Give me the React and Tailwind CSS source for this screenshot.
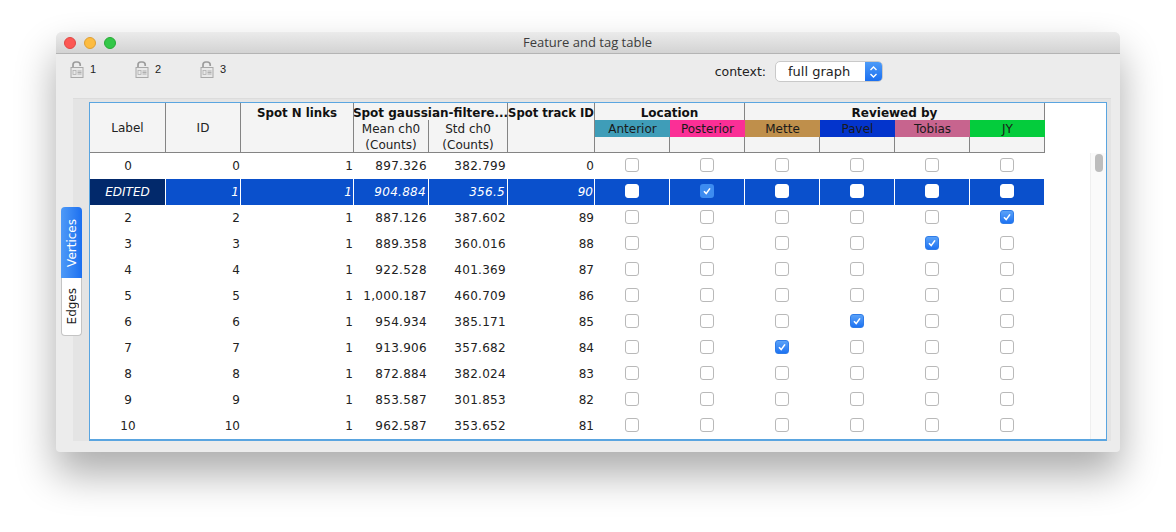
import React from 'react'

// Spalten: Label, ID, Spot N links, Mean, Std, Track ID, dann 6 Tag-Spalten
const SPALTEN = 'grid-cols-[76px_75px_113px_75px_79px_87px_75px_75px_75px_75px_75px_75px]'

const TAGS = [
  { name: 'Anterior', farbe: 'bg-[#3f9db8]' },
  { name: 'Posterior', farbe: 'bg-[#fb2f96]' },
  { name: 'Mette', farbe: 'bg-[#bf8f4b]' },
  { name: 'Pavel', farbe: 'bg-[#0334cc]' },
  { name: 'Tobias', farbe: 'bg-[#c7648e]' },
  { name: 'JY', farbe: 'bg-[#04cc3c]' },
]

// check = Index der angehakten Tag-Spalte
const ZEILEN = [
  { label: '0', id: 0, mean: '897.326', std: '382.799', track: 0 },
  { label: 'EDITED', id: 1, mean: '904.884', std: '356.5', track: 90, check: 1, aktiv: true },
  { label: '2', id: 2, mean: '887.126', std: '387.602', track: 89, check: 5 },
  { label: '3', id: 3, mean: '889.358', std: '360.016', track: 88, check: 4 },
  { label: '4', id: 4, mean: '922.528', std: '401.369', track: 87 },
  { label: '5', id: 5, mean: '1,000.187', std: '460.709', track: 86 },
  { label: '6', id: 6, mean: '954.934', std: '385.171', track: 85, check: 3 },
  { label: '7', id: 7, mean: '913.906', std: '357.682', track: 84, check: 2 },
  { label: '8', id: 8, mean: '872.884', std: '382.024', track: 83 },
  { label: '9', id: 9, mean: '853.587', std: '301.853', track: 82 },
  { label: '10', id: 10, mean: '962.587', std: '353.652', track: 81 },
]

function Schloss({ nummer }) {
  return (
    <div className="flex items-center w-[65px] gap-[6px]">
      <svg width="14" height="17" viewBox="0 0 14 17">
        <path d="M3 7V3.8C3 2 4.2 1 5.8 1h1.4C9 1 10.2 2 10.2 3.8V5" fill="none" stroke="#9c9c9c" strokeWidth="1.7" />
        <rect x="1" y="6.5" width="12" height="10" fill="#e9e9e9" stroke="#a8a8a8" />
        <rect x="3" y="9.5" width="3" height="4" fill="none" stroke="#b0b0b0" strokeWidth="0.8" />
        <path d="M7.5 10h4M7.5 11.5h4M7.5 13h4" stroke="#a0a0a0" strokeWidth="0.8" />
      </svg>
      <span className="text-[11px] text-[#222] font-['Liberation_Sans',sans-serif]">{nummer}</span>
    </div>
  )
}

function Checkbox({ an, aktiv }) {
  if (an) {
    return (
      <span className={`w-[14px] h-[14px] rounded-[3px] flex items-center justify-center ${aktiv ? 'bg-[#3d8cf0]' : 'bg-gradient-to-b from-[#5aa2f8] to-[#1c72f2] border border-[#2f7ce8]'}`}>
        <svg width="10" height="10" viewBox="0 0 10 10">
          <path d="M2 5.2L4.2 7.6L8 2.4" fill="none" stroke="white" strokeWidth="1.6" />
        </svg>
      </span>
    )
  }
  return <span className={`w-[14px] h-[14px] rounded-[3px] bg-white border ${aktiv ? 'border-white' : 'border-[#b9b9b9]'}`} />
}

function Kopf() {
  const zelle = 'bg-[#f4f4f4] border-r border-[#848484] flex justify-center'
  const fett = 'font-bold text-[#111] pt-[2px] whitespace-nowrap'
  return (
    <div className={`grid ${SPALTEN} grid-rows-[17px_17px_15px] border-b border-[#848484] text-[12px] leading-[16px] text-[#222]`}>
      <div className={`${zelle} row-span-3 items-center pt-[1px]`}>Label</div>
      <div className={`${zelle} row-span-3 items-center pt-[1px]`}>ID</div>
      <div className={`${zelle} ${fett} row-span-3 text-[11.8px]`}>Spot N links</div>
      <div className={`${zelle} ${fett} col-span-2 overflow-hidden`}>Spot gaussian-filtere...</div>
      <div className={`${zelle} ${fett} row-span-3 text-[11.6px]`}>Spot track ID</div>
      <div className={`${zelle} ${fett} col-span-2`}>Location</div>
      <div className={`${zelle} ${fett} col-span-4`}>Reviewed by</div>
      <div className={`${zelle} row-span-2 text-center pt-[1px]`}>Mean ch0<br />(Counts)</div>
      <div className={`${zelle} row-span-2 text-center pt-[1px]`}>Std ch0<br />(Counts)</div>
      {TAGS.map(tag => (
        <div key={tag.name} className={`${tag.farbe} flex justify-center pt-[1px] text-[#1a1a1a]`}>{tag.name}</div>
      ))}
      {TAGS.map(tag => (
        <div key={tag.name} className={zelle} />
      ))}
    </div>
  )
}

function Zeile({ z }) {
  const rand = z.aktiv ? 'border-r border-white' : ''
  const zahl = `flex items-center justify-end pr-[1px] ${rand}`
  const breit = `${zahl} pr-[2px] tracking-[0.3px]`
  return (
    <div className={`grid ${SPALTEN} h-[26px] text-[12px] ${z.aktiv ? 'bg-[#0a50cc] text-white italic' : 'text-[#222]'}`}>
      <div className={`flex items-center justify-center ${rand} ${z.aktiv ? 'bg-[#02296b]' : ''}`}>{z.label}</div>
      <div className={zahl}>{z.id}</div>
      <div className={zahl}>1</div>
      <div className={breit}>{z.mean}</div>
      <div className={breit}>{z.std}</div>
      <div className={zahl}>{z.track}</div>
      {TAGS.map((tag, i) => (
        <div key={tag.name} className={`flex items-center justify-center pr-[1px] pb-[2px] ${rand}`}>
          <Checkbox an={z.check === i} aktiv={z.aktiv} />
        </div>
      ))}
    </div>
  )
}

export default function App() {
  return (
    <div className="w-[1176px] h-[532px] bg-white pl-[56px] pt-[32px] overflow-hidden font-['DejaVu_Sans',sans-serif]">
      <div className="w-[1064px] h-[420px] flex flex-col bg-[#ececec] rounded-t-[6px] rounded-b-[4px] shadow-[0_22px_40px_rgba(0,0,0,0.33)]">

        {/* Titelleiste */}
        <div className="relative h-[22px] shrink-0 flex items-center justify-center rounded-t-[6px] bg-gradient-to-b from-[#ebebeb] to-[#d3d3d3] border-b border-[#b4b4b4]">
          <div className="absolute left-[8px] top-[5px] flex gap-[8px]">
            <span className="w-[12px] h-[12px] rounded-full bg-[#fc5753] border border-[#df4744]" />
            <span className="w-[12px] h-[12px] rounded-full bg-[#fdbc40] border border-[#de9f34]" />
            <span className="w-[12px] h-[12px] rounded-full bg-[#33c748] border border-[#27aa35]" />
          </div>
          <span className="text-[13px] -ml-[1px] text-[#3c3c3c] font-['Open_Sans',sans-serif]">Feature and tag table</span>
        </div>

        {/* Werkzeugleiste */}
        <div className="h-[44px] shrink-0 flex items-start pl-[14px] pr-[237px]">
          <div className="flex mt-[7px]">
            <Schloss nummer="1" />
            <Schloss nummer="2" />
            <Schloss nummer="3" />
          </div>
          <div className="ml-auto flex items-center gap-[9px] mt-[7px]">
            <span className="text-[12.5px] text-[#222] pt-[1px]">context:</span>
            <div className="w-[108px] h-[21px] flex bg-white rounded-[5px] border border-[#c9c9c9] overflow-hidden">
              <span className="flex-1 pl-[12px] text-[13px] leading-[19px] text-[#222]">full graph</span>
              <span className="w-[17px] flex items-center justify-center bg-gradient-to-b from-[#4d9bf8] to-[#1a6ff0]">
                <svg width="9" height="14" viewBox="0 0 9 14">
                  <path d="M1.5 5L4.5 2L7.5 5M1.5 9L4.5 12L7.5 9" fill="none" stroke="white" strokeWidth="1.4" />
                </svg>
              </span>
            </div>
          </div>
        </div>

        {/* Tabs + Tabelle */}
        <div className="flex items-start pl-[5px]">
          <div className="relative z-10 -mr-[9px] mt-[109px] w-[21px] flex flex-col text-[12px] shrink-0">
            <div className="h-[71px] rounded-t-[4px] bg-gradient-to-r from-[#4e9af7] to-[#1b6ff0] text-white flex items-center justify-center">
              <span className="[writing-mode:vertical-rl] rotate-180">Vertices</span>
            </div>
            <div className="h-[58px] rounded-b-[4px] bg-white border border-t-0 border-[#c4c4c4] text-[#1a1a1a] flex items-center justify-center">
              <span className="[writing-mode:vertical-rl] rotate-180">Edges</span>
            </div>
          </div>
          <div className="w-[1038px] h-[343px] bg-[#e4e4e4] border-t border-[#dcdcdc] pl-[16px] pr-[4px] pt-[3px]">
            <div className="h-[339px] bg-white border border-[#5aa5e0] border-b-2 flex overflow-hidden">
              <div className="w-[955px] shrink-0">
                <Kopf />
                {ZEILEN.map(z => <Zeile key={z.id} z={z} />)}
              </div>
              <div className="flex-1" />
              <div className="w-[16px] mt-[50px] bg-[#fafafa] border-l border-[#efefef] pl-[4px] pt-[1px]">
                <div className="w-[8px] h-[18px] rounded-full bg-[#bdbdbd]" />
              </div>
            </div>
          </div>
        </div>
      </div>
    </div>
  )
}
